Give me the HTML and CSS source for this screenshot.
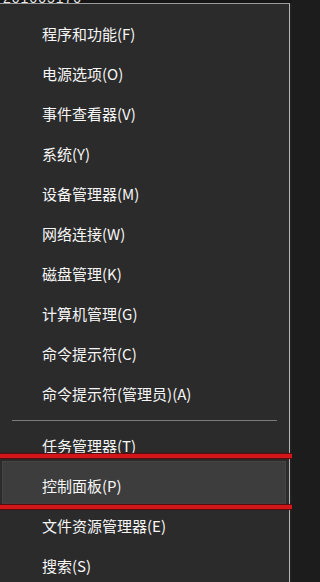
FILE: index.html
```html
<!DOCTYPE html>
<html lang="zh-CN">
<head>
<meta charset="utf-8">
<title>Win+X 菜单</title>
<link rel="stylesheet" href="styles.css">
</head>
<body>
<div class="page">
  <div class="topstrip"><span class="toptext">201605170</span></div>
  <div class="frame">
    <nav class="menu">
      <div class="item">程序和功能(F)</div>
      <div class="item">电源选项(O)</div>
      <div class="item">事件查看器(V)</div>
      <div class="item">系统(Y)</div>
      <div class="item">设备管理器(M)</div>
      <div class="item">网络连接(W)</div>
      <div class="item">磁盘管理(K)</div>
      <div class="item">计算机管理(G)</div>
      <div class="item">命令提示符(C)</div>
      <div class="item">命令提示符(管理员)(A)</div>
      <div class="sep"></div>
      <div class="item">任务管理器(T)</div>
      <div class="item active">控制面板(P)</div>
      <div class="item">文件资源管理器(E)</div>
      <div class="item">搜索(S)</div>
    </nav>
    <div class="edge"></div>
  </div>
  <div class="mark mark-top"></div>
  <div class="mark mark-bottom"></div>
</div>
</body>
</html>
```
FILE: styles.css
```css
html, body {
  margin: 0;
  padding: 0;
  background: #1c1c1c;
}
.page {
  position: relative;
  width: 292px;
  height: 582px;
  overflow: hidden;
  font-family: "Noto Sans CJK SC", "Noto Sans", sans-serif;
}
.topstrip {
  height: 3px;
  overflow: hidden;
  background: #161616;
  padding-left: 3px;
}
.toptext {
  display: block;
  margin-top: -9px;
  font-family: "Liberation Sans", sans-serif;
  font-size: 14px;
  line-height: 14px;
  color: #e6e6e6;
  letter-spacing: 1px;
}
.frame {
  display: flex;
  height: 579px;
}
.menu {
  width: 290px;
  background: #2b2b2b;
  border-top: 1px solid #9a9a9a;
  border-right: 1px solid #b4b4b4;
  padding-top: 10px;
  box-sizing: border-box;
}
.edge {
  flex: 1;
  background: #202020;
}
.item {
  position: relative;
  isolation: isolate;
  height: 40px;
  line-height: 40px;
  padding-left: 42px;
  font-size: 15px;
  color: #f6f6f6;
  white-space: nowrap;
}
.item.active::before {
  content: "";
  position: absolute;
  top: -5px;
  bottom: 2px;
  left: 2px;
  right: 3px;
  background: #3d3d3d;
  border: 1px solid #454545;
  z-index: -1;
}
.sep {
  height: 12px;
  display: flex;
  align-items: center;
  padding: 0 12px;
}
.sep::before {
  content: "";
  flex: 1;
  height: 1px;
  background: #7a7a7a;
}
.mark {
  position: absolute;
  left: 0;
  width: 292px;
  height: 4px;
  background: #d3161a;
  box-shadow: 0 1px 1px #5a0a0a, 0 -1px 1px #5a0a0a;
}
.mark-top {
  top: 454px;
}
.mark-bottom {
  top: 505px;
}
```
